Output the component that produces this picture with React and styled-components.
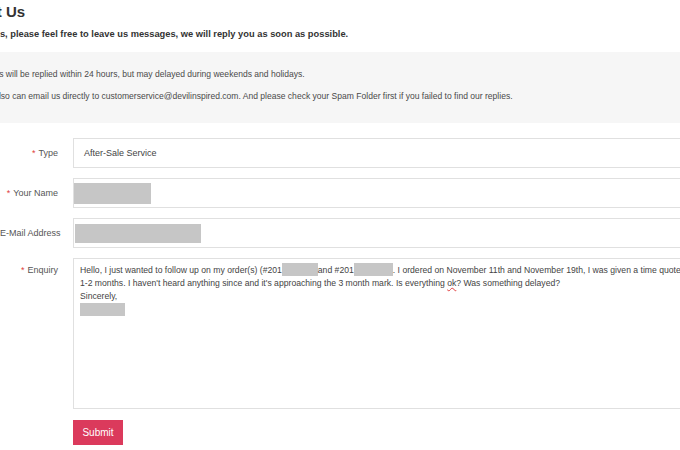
import React from 'react';
import styled, { createGlobalStyle } from 'styled-components';

const GlobalStyle = createGlobalStyle`
  html, body {
    margin: 0;
    padding: 0;
    background: #fff;
    overflow: hidden;
  }
  body {
    font-family: "Liberation Sans", Arial, sans-serif;
    color: #333;
  }
`;

const Page = styled.div`
  width: 900px;
  display: flex;
  flex-direction: column;
`;

const Title = styled.h1`
  margin: 0;
  font-size: 15px;
  line-height: 24px;
  font-weight: 700;
  color: #333;
  white-space: nowrap;
  margin-left: ${p => p.shift}px;
`;

const Lead = styled.p`
  margin: 3px 0 0;
  font-size: 9.3px;
  line-height: 14px;
  font-weight: 700;
  color: #333;
  white-space: nowrap;
  margin-left: ${p => p.shift}px;
`;

const Notice = styled.div`
  margin-top: 11px;
  height: 71px;
  background: #f6f6f6;
  display: flex;
  flex-direction: column;
  gap: 10px;
  padding-top: 16px;
  box-sizing: border-box;
`;

const NoticeLine = styled.p`
  margin: 0;
  font-size: 8.55px;
  line-height: 12px;
  color: #4a4a4a;
  white-space: nowrap;
  margin-left: ${p => p.shift}px;
`;

const Form = styled.form`
  margin-top: 15px;
  display: flex;
  flex-direction: column;
  gap: 10px;
`;

const Row = styled.div`
  display: grid;
  grid-template-columns: 58px 1fr;
  column-gap: 15px;
  align-items: ${p => (p.top ? 'start' : 'center')};
`;

const Label = styled.label`
  font-size: 9px;
  color: #555;
  text-align: right;
  white-space: nowrap;
  padding-top: ${p => (p.top ? '7px' : '0')};
`;

const Star = styled.span`
  color: #e04040;
  margin-right: 3px;
`;

const Field = styled.div`
  height: ${p => p.h || 30}px;
  box-sizing: border-box;
  border: 1px solid #e0e0e0;
  background: #fff;
  display: flex;
  align-items: center;
  padding-left: ${p => p.pad || 0}px;
  font-size: 9px;
  color: #444;
`;

const Redact = styled.span`
  display: inline-block;
  background: #c6c6c6;
  width: ${p => p.w}px;
  height: ${p => p.h}px;
  vertical-align: ${p => p.va || 'middle'};
`;

const TextArea = styled.div`
  height: 151px;
  box-sizing: border-box;
  border: 1px solid #e0e0e0;
  padding: 4px 0 0 6px;
  font-size: 8.65px;
  line-height: 13px;
  color: #444;
  overflow: hidden;
`;

const TextLine = styled.div`
  white-space: nowrap;
`;

const Squiggle = styled.span`
  text-decoration: underline wavy #e04040;
  text-decoration-thickness: 1px;
`;

const Actions = styled.div`
  padding-left: 73px;
  margin-top: 1px;
`;

const Submit = styled.button`
  width: 50px;
  height: 25px;
  border: none;
  background: #db3a5c;
  color: #fff;
  font-family: "Liberation Sans", Arial, sans-serif;
  font-size: 10px;
  padding: 0;
  cursor: pointer;
`;

export default function App() {
  return (
    <>
      <GlobalStyle />
      <Page>
        <Title shift={-54}>Contact Us</Title>
        <Lead shift={-137}>
          If you have any questions for us, please feel free to leave us messages, we will reply you as soon as possible.
        </Lead>
        <Notice>
          <NoticeLine shift={-45}>
            1. Messages will be replied within 24 hours, but may delayed during weekends and holidays.
          </NoticeLine>
          <NoticeLine shift={-32}>
            2. You also can email us directly to customerservice@devilinspired.com. And please check your Spam Folder first if you failed to find our replies.
          </NoticeLine>
        </Notice>
        <Form>
          <Row>
            <Label><Star>*</Star>Type</Label>
            <Field pad={10}>After-Sale Service</Field>
          </Row>
          <Row>
            <Label><Star>*</Star>Your Name</Label>
            <Field>
              <Redact w={77} h={21} />
            </Field>
          </Row>
          <Row>
            <Label>E-Mail Address</Label>
            <Field pad={1}>
              <Redact w={126} h={19} />
            </Field>
          </Row>
          <Row top>
            <Label top><Star>*</Star>Enquiry</Label>
            <TextArea>
              <TextLine>
                Hello, I just wanted to follow up on my order(s) (#201<Redact w={36} h={13} va="-3px" />and #201<Redact w={39} h={13} va="-3px" />. I ordered on November 11th and November 19th, I was given a time quote of
              </TextLine>
              <TextLine>
                1-2 months. I haven't heard anything since and it's approaching the 3 month mark. Is everything <Squiggle>ok</Squiggle>? Was something delayed?
              </TextLine>
              <TextLine>Sincerely,</TextLine>
              <TextLine>
                <Redact w={45} h={13} va="-3px" />
              </TextLine>
            </TextArea>
          </Row>
          <Actions>
            <Submit type="button">Submit</Submit>
          </Actions>
        </Form>
      </Page>
    </>
  );
}
